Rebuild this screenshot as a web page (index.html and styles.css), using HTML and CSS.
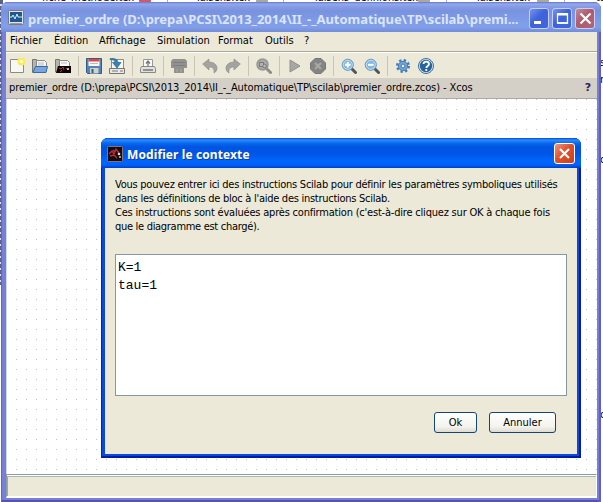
FILE: index.html
```
<!DOCTYPE html>
<html lang="fr">
<head>
<meta charset="utf-8">
<title>premier_ordre - Xcos</title>
<link rel="stylesheet" href="styles.css">
</head>
<body>
<div class="desktop">
  <div class="behind">
    <span class="tab t1">fiche_methode.tex</span><i class="x red"></i>
    <span class="tab t2">laisens.tex</span><i class="x x2"></i>
    <span class="tab t3">laisens_definions.tex</span><i class="x x3"></i>
    <span class="tab t4">laisens.tex</span><i class="x x4"></i><span class="tab t5">ta</span>
    <span class="edge e1">s</span><span class="edge e2">n</span><span class="edge e3">c</span><span class="edge e4">c</span>
  </div>

  <main class="window">
    <header class="titlebar">
      <svg class="app" width="16" height="16" viewBox="0 0 16 16"><rect x=".5" y=".5" width="15" height="14" rx="1" fill="#e4e3dc" stroke="#777b88"/><rect x="2" y="2" width="12" height="10" fill="#23568f"/><path d="M2 7h2l1-2 2 4 2-5 1 3h4" fill="none" stroke="#c8f3ff"/><path d="M2 13.5h12" stroke="#9a9a96"/></svg>
      <h1>premier_ordre (D:\prepa\PCSI\2013_2014\II_-_Automatique\TP\scilab\premi...</h1>
      <div class="controls">
        <button class="ctl"><svg width="19" height="19"><path d="M4 13.5h7" stroke="#fff" stroke-width="3"/></svg></button>
        <button class="ctl"><svg width="19" height="19"><path d="M4.5 4v10h10V4M4 5h11" fill="none" stroke="#fff" stroke-width="1.3"/><path d="M4 5.2h11" stroke="#fff" stroke-width="2.6"/><path d="M4 14h11" stroke="#fff" stroke-width="1.3"/></svg></button>
        <button class="ctl close"><svg width="19" height="19"><path d="m4.500 4.500 10 10m0-10-10 10" stroke="#fff" stroke-width="2.200"/></svg></button>
      </div>
    </header>

    <div class="client">
      <nav class="menu"><span class="m1">Fichier</span><span class="m2">Édition</span><span class="m3">Affichage</span><span class="m4">Simulation</span><span class="m5">Format</span><span class="m6">Outils</span><span class="m7">?</span></nav>

      <div class="toolbar">
        <svg class="ic" viewBox="0 0 16 16"><path d="M1.500 1.500h13v13h-13z" fill="#f7f7f4" stroke="#8b8b86"/><circle cx="12.500" cy="3.500" r="4" fill="#f8ed58"/><circle cx="12.500" cy="3.500" r="1.800" fill="#fffbb8"/></svg>
        <svg class="ic" viewBox="0 0 16 16"><path d="M.5 14V1.500h4l1 1.500h3v11z" fill="#b5b5b0" stroke="#777"/><path d="M4.500 2.500h8l2 2V11h-10z" fill="#f7f7f7" stroke="#888"/><path d="M6 5h6M6 7h6" stroke="#bbb"/><path d="M3.500 8.500h12l-1.500 6H.8z" fill="#78a5dc" stroke="#356ba9"/></svg>
        <svg class="ic" viewBox="0 0 16 16"><path d="M.5 14V1.500h4l1 1.500h3v11z" fill="#b5b5b0" stroke="#777"/><path d="M4.500 2.500h8l2 2V9h-10z" fill="#f7f7f7" stroke="#888"/><path d="M6 5h6" stroke="#bbb"/><path d="M3 8h13v7H1z" fill="#080405"/><path d="m4 10 2 1 2-2 1 3m2-2 2 2m-6 0-2 2" fill="none" stroke="#d32929"/><circle cx="13" cy="11" r="1" fill="#eee"/></svg>
        <i class="sep"></i>
        <svg class="ic" viewBox="0 0 16 16"><path d="M.5.500h15v15h-14l-1-1z" fill="#5584b5" stroke="#315b88"/><path d="M2.500 1h11v7h-11z" fill="#f8f8f8"/><path d="M2.500 1h11v2.500h-11z" fill="#e04640"/><path d="M4 5.500h8" stroke="#bbb"/><path d="M4 10h8.500v5.500H4z" fill="#d1d1cd"/><path d="M5.500 11h2v4h-2z" fill="#345d8b"/></svg>
        <svg class="ic" viewBox="0 0 16 16"><path d="M2.500 1.500h12v9h-12z" fill="#f7f7f5" stroke="#8b8b88"/><path d="M.5 10.500h15v5H.5z" fill="#eaeae5" stroke="#777"/><path d="M3 13h6M11 13h3" stroke="#777"/><path d="M1 .5c5-.5 8 1 8 4h3L8 10 3.500 4.500h2.700C6 2.500 4 1.500 1 1.500z" fill="#3d83af" stroke="#23658e" stroke-width=".7"/></svg>
        <i class="sep"></i>
        <svg class="ic" viewBox="0 0 16 16"><path d="M3.500 9V1.500h9V9" fill="#fafafa" stroke="#999"/><path d="M8 3v5M6 5.500 8 3l2 2.500" fill="none" stroke="#777" stroke-width="1.300"/><path d="M1.500 8.500h13l1 2v4H.5v-4z" fill="#e0e0dd" stroke="#888"/><path d="M3 12h10" stroke="#777" stroke-width="1.500"/></svg>
        <i class="sep"></i>
        <svg class="ic" viewBox="0 0 16 16"><path d="M2 1h12l2 2v7h-3v5H3v-5H0V3z" fill="#929290"/><path d="M2 4.500h12M2 7.500h12" stroke="#7e7e7c"/><path d="M6 11v3M10 11v3" stroke="#aaa"/></svg>
        <i class="sep"></i>
        <svg class="ic" viewBox="0 0 16 16"><path d="M.7 6 7 1v3c5 0 8 3 8 6 0 2-1 4-3 5 .5-4-1-6-5-6v3z" fill="#a2a29e" stroke="#8f8f8c" stroke-width=".7"/></svg>
        <svg class="ic" viewBox="0 0 16 16"><path d="M15.300 6 9 1v3C4 4 1 7 1 10c0 2 1 4 3 5-.5-4 1-6 5-6v3z" fill="#a2a29e" stroke="#8f8f8c" stroke-width=".7"/></svg>
        <i class="sep"></i>
        <svg class="ic" viewBox="0 0 16 16"><path d="m10.500 10.500 4 4" stroke="#8c8c89" stroke-width="3" stroke-linecap="round"/><circle cx="6.500" cy="6.500" r="5.500" fill="#aaa9a5" stroke="#979794" stroke-width="1.500"/><path d="M3.500 4.500h4v4h-4z" fill="#b8b8b3" stroke="#777"/><circle cx="8.500" cy="8" r="1.800" fill="#bcbcb8" stroke="#777"/></svg>
        <i class="sep"></i>
        <svg class="ic" viewBox="0 0 16 16"><path d="M3 2v12l10-6z" fill="#a7a7a3" stroke="#90908d"/></svg>
        <svg class="ic" viewBox="0 0 16 16"><path d="M5 .5h6L15.500 5v6L11 15.500H5L.5 11V5z" fill="#858583" stroke="#777"/><path d="m5 5 6 6m0-6-6 6" stroke="#aaa9a5" stroke-width="2"/></svg>
        <i class="sep"></i>
        <svg class="ic" viewBox="0 0 16 16"><path d="m11 11 3.500 3.500" stroke="#555" stroke-width="3" stroke-linecap="round"/><circle cx="6.800" cy="6.800" r="5.600" fill="#84b7e1" stroke="#6f9bc4"/><circle cx="6.800" cy="6.800" r="4.500" fill="none" stroke="#bfdcf1"/><path d="M4 6.800h5.600M6.800 4v5.600" stroke="#fff" stroke-width="2"/></svg>
        <svg class="ic" viewBox="0 0 16 16"><path d="m11 11 3.500 3.500" stroke="#555" stroke-width="3" stroke-linecap="round"/><circle cx="6.800" cy="6.800" r="5.600" fill="#84b7e1" stroke="#6f9bc4"/><circle cx="6.800" cy="6.800" r="4.500" fill="none" stroke="#bfdcf1"/><path d="M4 6.800h5.600" stroke="#fff" stroke-width="2"/></svg>
        <i class="sep"></i>
        <svg class="ic" viewBox="0 0 16 16"><circle cx="8" cy="8" r="5.800" fill="none" stroke="#427cb8" stroke-width="2.400" stroke-dasharray="2.300 2.255"/><circle cx="8" cy="8" r="4.700" fill="#73a3d3" stroke="#427cb8"/><circle cx="8" cy="8" r="1.900" fill="#efeee0" stroke="#427cb8"/></svg>
        <svg class="ic" viewBox="0 0 16 16"><circle cx="8" cy="8" r="7.500" fill="#e1edf7" stroke="#396f9f"/><circle cx="8" cy="8" r="6.200" fill="#29649e"/><path d="M5.500 6C5.500 2.700 11 3 11 6c0 2-2.700 1.800-2.700 4M8.300 11v2" fill="none" stroke="#fff" stroke-width="1.800"/></svg>
      </div>

      <div class="pathbar"><span>premier_ordre (D:\prepa\PCSI\2013_2014\II_-_Automatique\TP\scilab\premier_ordre.zcos) - Xcos</span><b>?</b></div>
      <div class="canvas"></div>
      <footer class="status"></footer>
    </div>
  </main>

  <section class="dialog">
    <header class="dtitle">
      <svg width="16" height="16" viewBox="0 0 16 16"><rect x=".5" y=".5" width="15" height="15" rx="1" fill="#110d12" stroke="#8a7078"/><path d="m2 8 3-3 2 3 2-5 3 4M3 10l4-1 3 3M6 4l2 2" fill="none" stroke="#c12e35" stroke-width="1.300"/><circle cx="12" cy="8" r="1.300" fill="#ddd"/><circle cx="13" cy="11" r="1.100" fill="#bbb"/></svg>
      <h2>Modifier le contexte</h2>
      <button class="dclose"><svg width="19" height="19"><path d="m5 5 9 9m0-9-9 9" stroke="#fff" stroke-width="2.200"/></svg></button>
    </header>
    <div class="dbody">
      <div class="message"><span class="l1">Vous pouvez entrer ici des instructions Scilab pour définir les paramètres symboliques utilisés</span><span class="l2">dans les définitions de bloc à l'aide des instructions Scilab.</span><span class="l3">Ces instructions sont évaluées après confirmation (c'est-à-dire cliquez sur OK à chaque fois</span><span class="l4">que le diagramme est chargé).</span></div>
      <div class="editor">K=1<br>tau=1</div>
      <div class="actions"><button class="ok">Ok</button><button class="cancel">Annuler</button></div>
    </div>
  </section>
</div>
</body>
</html>
```
FILE: styles.css
```
* { box-sizing: border-box; }
body { margin: 0; overflow: hidden; background: #fff; font: 11px/14px "DejaVu Sans Condensed", "Noto Sans", sans-serif; color: #000; }
button { margin: 0; padding: 0; border: 0; font: inherit; color: inherit; }
svg { display: block; flex: none; }
.desktop { position: relative; width: 603px; height: 502px; overflow: hidden; padding: 2px 2px 0 1px; }

.behind { position: absolute; inset: 0; overflow: hidden; background: linear-gradient(#a9afbd, #a9afbd) 167px 0 / 1px 3px no-repeat, linear-gradient(#a9afbd, #a9afbd) 283px 0 / 1px 3px no-repeat, linear-gradient(#a9afbd, #a9afbd) 446px 0 / 1px 3px no-repeat, linear-gradient(#a9afbd, #a9afbd) 564px 0 / 1px 3px no-repeat, repeating-linear-gradient(#59618c 0 4px, #dce0ed 4px 6px) 0 0 / 3px 285px no-repeat, #fff; }
.tab { position: absolute; top: -8px; font-size: 11px; line-height: 12px; white-space: nowrap; }
.t1 { left: 42px; }
.t2 { left: 197px; }
.t3 { left: 315px; }
.t4 { left: 477px; }
.t5 { left: 596px; }
.x { position: absolute; left: 139px; top: -9px; width: 12px; height: 12px; border-radius: 2px; background: #aaa99d; }
.x.red { background: #cf5b64; }
.x2 { left: 256px; }
.x3 { left: 418px; }
.x4 { left: 537px; }
.edge { position: absolute; left: 600px; }
.e1 { top: 56px; }
.e2 { top: 73px; }
.e3 { top: 153px; }
.e4 { top: 408px; }

.window { position: relative; display: flex; flex-direction: column; width: 600px; height: 500px; padding: 0 4px 4px 5px; background: #7680d9; border-radius: 7px 7px 0 0; box-shadow: inset 1px 0 #6068bd, inset -2px 0 #5f5fc4, inset 0 -2px #5552b2; }
.titlebar { display: flex; align-items: center; height: 30px; margin: 0 -4px 0 -5px; padding: 1px 6px 0 7px; border-radius: 7px 7px 0 0; background: linear-gradient(#6674d2 0, #91a9ed 2px, #849be4 5px, #7892df 9px, #7d9be7 18px, #829fe9 25px, #728cda 30px); }
h1 { flex: 1; margin: 2px 0 0 4px; color: #dce5fa; font: bold 13px/18px "Noto Sans", sans-serif; letter-spacing: -.05px; white-space: nowrap; }
.controls { display: flex; gap: 3px; padding-top: 1px; }
.ctl { width: 20px; height: 21px; border: 1px solid #c6d0f5; border-radius: 3px; background: linear-gradient(135deg, #7894f0, #3d62da 45%, #4166dc); overflow: hidden; }
.ctl.close { background: linear-gradient(135deg, #c58a9b, #ae5a6d 45%, #b56576); }
.client { display: flex; flex-direction: column; flex: 1; background: #ece9d8; }

.menu { display: flex; height: 20px; padding: 2px 0 0 4px; border-bottom: 1px solid #aaa797; white-space: nowrap; }
.menu span { flex: none; }
.m1 { width: 44px; }
.m2 { width: 45px; }
.m3 { width: 58px; }
.m4 { width: 61px; }
.m5 { width: 47px; }
.m6 { width: 39px; }
.toolbar { display: flex; align-items: center; height: 26px; padding-left: 3px; border-top: 1px solid #fff; }
.ic { width: 16px; height: 16px; margin-right: 7px; }
.sep { width: 1px; height: 20px; margin-right: 7px; background: #c8c5b6; }
.pathbar { display: flex; justify-content: space-between; height: 21px; padding: 3px 6px 0 3px; background: #d4d0c8; border-bottom: 1px solid #a9a8ad; letter-spacing: -.1px; white-space: nowrap; }
.pathbar b { color: #32205e; font-family: "DejaVu Sans", sans-serif; }
.canvas { flex: 1; background: radial-gradient(circle at .5px .5px, #c2c2c6 0 .6px, transparent .7px) 9px 0 / 10px 10px, #fff; border-left: 1px solid #d3d8e8; }
.status { height: 24px; border: 1px solid #8b9ca3; border-right-color: #fff; border-bottom: 2px solid #fff; box-shadow: inset 0 1px #fff, inset 0 2px #aab6b5, inset 1px 0 #9da8aa; }

.dialog { position: absolute; left: 101px; top: 138px; display: flex; flex-direction: column; width: 480px; height: 320px; padding: 0 4px 4px; background: #0a49dc; border-radius: 7px 7px 0 0; box-shadow: inset 1px 0 #0026b8, inset -2px 0 #001ca5, inset 0 -2px #001ca5; }
.dtitle { display: flex; align-items: center; height: 30px; margin: 0 -4px; padding: 1px 6px 0; border-radius: 7px 7px 0 0; background: linear-gradient(#0048d2 0, #2f8cff 2px, #086aef 5px, #0054e0 9px, #0056e8 16px, #0066ff 23px, #0062f6 27px, #003ed0 30px); }
h2 { flex: 1; margin: 2px 0 0 4px; color: #fff; font: bold 12px/18px "Noto Sans", sans-serif; letter-spacing: .1px; text-shadow: 1px 1px #123c99; white-space: nowrap; }
.dclose { width: 21px; height: 21px; border: 1px solid #fff; border-radius: 3px; background: linear-gradient(135deg, #ef967c, #df512d 45%, #cf3e18); overflow: hidden; }
.dbody { display: flex; flex-direction: column; flex: 1; padding: 10px 10px 0; background: #ece9d8; }
.message { height: 76px; }
.message span { display: block; white-space: nowrap; width: max-content; }
.l1 { letter-spacing: -.245px; }
.l2 { letter-spacing: -.27px; }
.l3 { letter-spacing: -.2px; }
.l4 { letter-spacing: -.3px; }
.editor { height: 142px; padding: 4px 2px; border: 1px solid #8797a0; background: #fff; font: 13px/18px "Liberation Mono", monospace; }
.actions { display: flex; justify-content: flex-end; gap: 12px; padding: 16px 11px 0 0; }
.actions button { height: 21px; border: 1px solid #164474; border-radius: 3px; background: linear-gradient(#fff, #f4f3ee 70%, #dedbd0); }
.ok { width: 43px; }
.cancel { width: 67px; }
```
